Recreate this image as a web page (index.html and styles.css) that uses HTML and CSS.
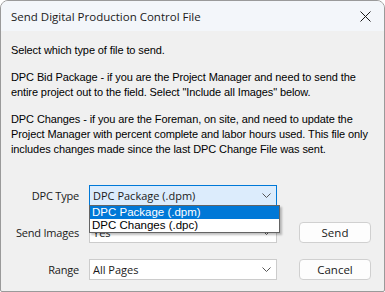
FILE: index.html
```html
<!DOCTYPE html>
<html lang="en">
  <head>
    <meta charset="UTF-8">
    <title>Send Digital Production Control File</title>
    <link rel="stylesheet" href="styles.css">
  </head>
  <body>
    <div id="janela">
      <div id="titulo">
        <span>Send Digital Production Control File</span>
        <svg class="fechar" width="11" height="11" viewBox="0 0 11 11">
          <path d="M0.5 0.5 L10.5 10.5 M10.5 0.5 L0.5 10.5" stroke="#1a1a1a" stroke-width="1"/>
        </svg>
      </div>
      <div id="conteudo">
        <p>Select which type of file to send.</p>
        <p>DPC Bid Package - if you are the Project Manager and need to send the entire project out to the field. Select "Include all Images" below.</p>
        <p>DPC Changes - if you are the Foreman, on site, and need to update the Project Manager with percent complete and labor hours used. This file only includes changes made since the last DPC Change File was sent.</p>

        <div id="formulario">
          <label class="rotulo">DPC Type</label>
          <div class="combo-area">
            <div class="combo ativo">
              <span>DPC Package (.dpm)</span>
              <svg class="seta" width="9" height="5" viewBox="0 0 9 5"><path d="M0.5 0.5 L4.5 4.5 L8.5 0.5" fill="none" stroke="#555" stroke-width="1"/></svg>
            </div>
            <div id="lista">
              <div class="item selecionado">DPC Package (.dpm)</div>
              <div class="item">DPC Changes (.dpc)</div>
            </div>
          </div>
          <div></div>

          <label class="rotulo">Send Images</label>
          <div class="combo">
            <span>Yes</span>
            <svg class="seta" width="9" height="5" viewBox="0 0 9 5"><path d="M0.5 0.5 L4.5 4.5 L8.5 0.5" fill="none" stroke="#555" stroke-width="1"/></svg>
          </div>
          <button class="botao">Send</button>

          <label class="rotulo">Range</label>
          <div class="combo">
            <span>All Pages</span>
            <svg class="seta" width="9" height="5" viewBox="0 0 9 5"><path d="M0.5 0.5 L4.5 4.5 L8.5 0.5" fill="none" stroke="#555" stroke-width="1"/></svg>
          </div>
          <button class="botao">Cancel</button>
        </div>
      </div>
    </div>
  </body>
</html>
```

FILE: styles.css
```css
body {
  margin: 0;
  background-color: #ffffff;
  font-family: "Open Sans", sans-serif;
}
#janela {
  width: 383px;
  height: 290px;
  border: 1px solid #9a9a9a;
  border-radius: 8px 8px 2px 2px;
  background-color: #f0f0f0;
  overflow: hidden;
  display: flex;
  flex-direction: column;
}
#titulo {
  height: 30px;
  background-color: #f3f6fa;
  display: flex;
  align-items: center;
  justify-content: space-between;
  padding: 0 13px 0 10px;
  font-size: 11.5px;
  color: #1a1a1a;
}
#conteudo {
  padding: 12px 10px 0 10px;
  font-family: "Liberation Sans", Arial, sans-serif;
  font-size: 11px;
  color: #000;
}
#conteudo p {
  margin: 0 0 12px 0;
  line-height: 15px;
  letter-spacing: -0.1px;
}
#formulario {
  display: grid;
  grid-template-columns: 68px 188px 72px;
  column-gap: 10px;
  row-gap: 16px;
  margin-top: 28px;
  align-items: center;
  font-family: "Open Sans", sans-serif;
  font-size: 11px;
}
#formulario .botao {
  margin-left: 12px;
}
.rotulo {
  text-align: right;
  white-space: nowrap;
  letter-spacing: -0.2px;
  color: #1a1a1a;
}
.combo-area {
  position: relative;
}
.combo {
  height: 21px;
  box-sizing: border-box;
  border: 1px solid #cccccc;
  background-color: #ffffff;
  display: flex;
  align-items: center;
  justify-content: space-between;
  padding: 0 5px 0 3px;
  color: #1a1a1a;
}
.combo.ativo {
  background-color: #dcecfc;
  border-color: #0078d7;
}
#lista {
  position: absolute;
  left: 0;
  top: 20px;
  width: 189px;
  border: 1px solid #646464;
  background-color: #ffffff;
  box-shadow: 2px 2px 2px rgba(0, 0, 0, 0.25);
  font-family: "Liberation Sans", Arial, sans-serif;
  font-size: 11.5px;
  z-index: 2;
}
.item {
  height: 13px;
  line-height: 13px;
  padding-left: 2px;
  color: #000;
}
.item.selecionado {
  background-color: #0078d7;
  color: #ffffff;
}
.botao {
  height: 21px;
  width: 72px;
  border: 1px solid #d0d0d0;
  border-radius: 4px;
  background-color: #fdfdfd;
  font-family: "Open Sans", sans-serif;
  font-size: 11.5px;
  color: #1a1a1a;
  padding: 0;
}
```
